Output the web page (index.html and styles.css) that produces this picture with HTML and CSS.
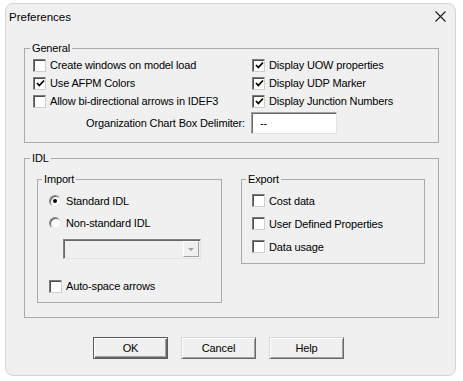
FILE: index.html
```html
<!DOCTYPE html>
<html lang="en">
<head>
    <meta charset="UTF-8">
    <title>Preferences</title>
    <link rel="stylesheet" href="styles.css">
</head>
<body>
    <div class="window">
        <div class="titlebar">
            <span class="title">Preferences</span>
            <svg class="close" width="11" height="11" viewBox="0 0 11 11">
                <path d="M0.5 0.5 L10.5 10.5 M10.5 0.5 L0.5 10.5" stroke="#1a1a1a" stroke-width="1.1" fill="none"/>
            </svg>
        </div>
        <div class="content">
            <fieldset class="group general">
                <legend>General</legend>
                <div class="general-grid">
                    <label class="check"><span class="box"></span>Create windows on model load</label>
                    <label class="check"><span class="box"><svg class="tick" width="9" height="9" viewBox="0 0 9 9"><path d="M1 4 L3.3 6.5 L8 1.5" stroke="#000" stroke-width="1.8" fill="none"/></svg></span>Display UOW properties</label>
                    <label class="check"><span class="box"><svg class="tick" width="9" height="9" viewBox="0 0 9 9"><path d="M1 4 L3.3 6.5 L8 1.5" stroke="#000" stroke-width="1.8" fill="none"/></svg></span>Use AFPM Colors</label>
                    <label class="check"><span class="box"><svg class="tick" width="9" height="9" viewBox="0 0 9 9"><path d="M1 4 L3.3 6.5 L8 1.5" stroke="#000" stroke-width="1.8" fill="none"/></svg></span>Display UDP Marker</label>
                    <label class="check"><span class="box"></span>Allow bi-directional arrows in IDEF3</label>
                    <label class="check"><span class="box"><svg class="tick" width="9" height="9" viewBox="0 0 9 9"><path d="M1 4 L3.3 6.5 L8 1.5" stroke="#000" stroke-width="1.8" fill="none"/></svg></span>Display Junction Numbers</label>
                    <div class="org-row">
                        <span class="org-label">Organization Chart Box Delimiter:</span>
                        <span class="textbox">--</span>
                    </div>
                </div>
            </fieldset>

            <fieldset class="group idl">
                <legend>IDL</legend>
                <div class="idl-row">
                    <fieldset class="group import">
                        <legend>Import</legend>
                        <label class="radio-row"><span class="radio"><span class="dot"></span></span>Standard IDL</label>
                        <label class="radio-row"><span class="radio"></span>Non-standard IDL</label>
                        <div class="select">
                            <span class="select-btn"><span class="arrow"></span></span>
                        </div>
                        <label class="check auto"><span class="box"></span>Auto-space arrows</label>
                    </fieldset>
                    <fieldset class="group export">
                        <legend>Export</legend>
                        <label class="check"><span class="box"></span>Cost data</label>
                        <label class="check"><span class="box"></span>User Defined Properties</label>
                        <label class="check"><span class="box"></span>Data usage</label>
                    </fieldset>
                </div>
            </fieldset>

            <div class="buttons">
                <button class="btn default">OK</button>
                <button class="btn">Cancel</button>
                <button class="btn">Help</button>
            </div>
        </div>
    </div>
</body>
</html>
```

FILE: styles.css
```css
body {
    margin: 0;
    background: #ffffff;
    font-family: "Liberation Sans", Arial, sans-serif;
    font-size: 11px;
    letter-spacing: -0.15px;
    color: #000;
}

.window {
    box-sizing: border-box;
    width: 451px;
    margin: 3px 0 0 5px;
    background: #f0f0f0;
    border: 1px solid #d4d4d4;
    border-radius: 8px;
    padding-bottom: 16px;
}

.titlebar {
    box-sizing: border-box;
    display: flex;
    justify-content: space-between;
    align-items: flex-start;
    height: 30px;
    padding: 6px 9px 0 3px;
}

.title {
    font-size: 11.5px;
    line-height: 14px;
    letter-spacing: 0;
}

.close {
    margin-top: 1px;
}

.content {
    padding: 7px 16px 0 18px;
}

.group {
    margin: 0;
    padding: 0;
    min-width: 0;
    border: 1px solid #aaaaaa;
}

.group legend {
    padding: 0 2px;
    line-height: 14px;
}

.general {
    padding: 1px 0 8px 8px;
}

.general legend {
    margin-left: -3px;
}

.general-grid {
    display: grid;
    grid-template-columns: 219px 1fr;
}

.check {
    display: flex;
    align-items: center;
    gap: 4px;
    height: 18px;
}

.box {
    box-sizing: border-box;
    width: 13px;
    height: 13px;
    background: #fff;
    border: 1px solid;
    border-color: #7a7a7a #cfcfcf #cfcfcf #7a7a7a;
    box-shadow: inset 1px 1px #505050;
    display: flex;
    align-items: center;
    justify-content: center;
}

.tick {
    margin: 1px 0 0 1px;
}

.org-row {
    grid-column: 1 / -1;
    display: flex;
    align-items: center;
    height: 22px;
    margin-top: 2px;
}

.org-label {
    width: 212px;
    text-align: right;
}

.textbox {
    box-sizing: border-box;
    display: flex;
    align-items: center;
    width: 86px;
    height: 22px;
    margin-left: 6px;
    padding-left: 8px;
    background: #fff;
    border: 1px solid;
    border-color: #a0a0a0 #e3e3e3 #e3e3e3 #a0a0a0;
    box-shadow: inset 1px 1px #696969;
}

.idl {
    margin-top: 8px;
    padding: 7px 13px 14px 12px;
}

.idl legend {
    margin-left: -7px;
}

.idl-row {
    display: flex;
    align-items: flex-start;
    gap: 19px;
}

.import {
    box-sizing: border-box;
    width: 185px;
    padding: 4px 0 7px 11px;
}

.import legend {
    margin-left: -7px;
}

.export {
    box-sizing: border-box;
    width: 184px;
    padding: 3px 0 5px 10px;
}

.export legend {
    margin-left: -6px;
}

.export .check {
    height: 23px;
}

.radio-row {
    display: flex;
    align-items: center;
    gap: 5px;
    height: 22px;
}

.radio {
    box-sizing: border-box;
    width: 12px;
    height: 12px;
    border-radius: 50%;
    background: #fff;
    border: 1px solid;
    border-color: #8a8a8a #e8e8e8 #e8e8e8 #8a8a8a;
    box-shadow: inset 1px 1px #606060;
    display: flex;
    align-items: center;
    justify-content: center;
}

.dot {
    width: 4px;
    height: 4px;
    border-radius: 50%;
    background: #000;
}

.select {
    box-sizing: border-box;
    display: flex;
    justify-content: flex-end;
    align-items: center;
    width: 138px;
    height: 20px;
    margin: 5px 0 0 14px;
    padding-right: 1px;
    background: #f0f0f0;
    border: 1px solid;
    border-color: #808080 #e3e3e3 #e3e3e3 #808080;
    box-shadow: inset 1px 1px #696969;
}

.select-btn {
    box-sizing: border-box;
    display: flex;
    align-items: center;
    justify-content: center;
    width: 16px;
    height: 16px;
    border: 1px solid;
    border-color: #ffffff #a0a0a0 #a0a0a0 #ffffff;
}

.arrow {
    width: 0;
    height: 0;
    border-left: 3px solid transparent;
    border-right: 3px solid transparent;
    border-top: 3px solid #a0a0a0;
}

.auto {
    margin-top: 18px;
}

.buttons {
    display: flex;
    gap: 13px;
    margin-top: 19px;
    padding-left: 69px;
}

.btn {
    box-sizing: border-box;
    width: 75px;
    height: 22px;
    padding: 0;
    font: inherit;
    letter-spacing: inherit;
    color: #000;
    background: #f0f0f0;
    border: 1px solid;
    border-color: #d8d8d8 #696969 #696969 #d8d8d8;
    box-shadow: inset 1px 1px #ffffff, inset -1px -1px #a0a0a0;
}

.btn.default {
    border-color: #5a5a5a;
    box-shadow: inset 1px 1px #ffffff, inset -1px -1px #696969, inset -2px -2px #a0a0a0;
}
```
